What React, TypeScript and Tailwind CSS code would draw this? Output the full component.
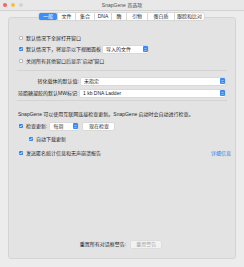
const font = { fontFamily: '"Liberation Sans", "Noto Sans CJK SC", sans-serif' };

const Check = ({ on }: { on?: boolean }) =>
  on ? (
    <span className="w-[4px] h-[4px] shrink-0 rounded-[1px] bg-[#2f83f3] flex items-center justify-center">
      <svg width="4" height="4" viewBox="0 0 8 8">
        <path d="M1.5 4.2 L3.3 6 L6.6 2" fill="none" stroke="white" strokeWidth="1.6" />
      </svg>
    </span>
  ) : (
    <span className="w-[4px] h-[4px] shrink-0 rounded-[1px] bg-white border-[0.5px] border-[#b8b8b8]" />
  );

const Stepper = () => (
  <span className="w-[5px] h-[6px] shrink-0 rounded-[1px] bg-[#3a8af5] flex flex-col items-center justify-center">
    <svg width="3" height="5" viewBox="0 0 6 10">
      <path d="M1 4 L3 2 L5 4 M1 6 L3 8 L5 6" fill="none" stroke="white" strokeWidth="1" />
    </svg>
  </span>
);

const Select = ({ text, className }: { text: string; className: string }) => (
  <div className={`h-[7px] bg-white rounded-[1px] shadow-[0_0_0_0.5px_#cfcfcf] flex items-center pl-[3px] pr-[0.5px] ${className}`}>
    <span className="flex-1 text-[5px] leading-none text-[#222]">{text}</span>
    <Stepper />
  </div>
);

const tabs: [string, string][] = [
  ["文件", "w-[18px]"],
  ["集合", "w-[19px]"],
  ["DNA", "w-[17px]"],
  ["酶", "w-[15px]"],
  ["引物", "w-[21px]"],
  ["蛋白质", "w-[27px]"],
  ["跟踪和比对", "w-[30px]"],
];

export default function App() {
  return (
    <div className="w-[244px] h-[267px] bg-[#ececec] flex flex-col text-[#262626]" style={font}>
      <div className="h-[11px] grid grid-cols-[1fr_auto_1fr] items-center px-[2.5px] bg-[#e8e8e8] border-b-[0.5px] border-[#d2d2d2]">
        <div className="flex gap-[4px]">
          <span className="w-[4px] h-[4px] rounded-full bg-[#fc605b]" />
          <span className="w-[4px] h-[4px] rounded-full bg-[#fdbc40]" />
          <span className="w-[4px] h-[4px] rounded-full bg-[#d3d3d3]" />
        </div>
        <span className="text-[5px] leading-none text-[#4d4d4d]">SnapGene 首选项</span>
        <span />
      </div>

      <div className="relative z-10 mt-[2px] -mb-[3px] flex justify-start pl-[39px]">
        <div className="flex h-[7px] rounded-[1.5px] bg-white shadow-[0_0_0_0.5px_#c9c9c9] text-[5px] leading-none">
          <span className="w-[18px] flex items-center justify-center rounded-[1.5px] bg-[#3b8ff7] text-white">一般</span>
          {tabs.map(([t, w]) => (
            <span key={t} className={`${w} flex items-center justify-center border-l-[0.5px] border-[#d6d6d6]`}>
              {t}
            </span>
          ))}
        </div>
      </div>

      <div className="mx-[8px] h-[242px] bg-[#e3e3e3] border-[0.5px] border-[#d4d4d4] rounded-[3px] flex flex-col px-[10px] pb-[10px] text-[5px] leading-none">
        <div className="mt-[16px] h-[8px] flex items-center gap-[3px]">
          <Check />
          <span>默认情况下全屏打开窗口</span>
        </div>
        <div className="mt-[3px] h-[8px] flex items-center gap-[3px]">
          <Check on />
          <span>默认情况下，将显示以下视图面板</span>
          <Select text="导入的文件" className="ml-[-1px] w-[45px]" />
        </div>
        <div className="mt-[4px] h-[8px] flex items-center gap-[3px]">
          <Check />
          <span>关闭所有其他窗口后显示“启动”窗口</span>
        </div>
        <div className="mt-[5px] mx-[-2px] h-px bg-[#d3d3d3]" />

        <div className="mt-[6px] h-[8px] flex items-center gap-[2px]">
          <span className="w-[60px] text-right">转化载体的默认值:</span>
          <Select text="未指定" className="flex-1" />
        </div>
        <div className="mt-[4px] h-[8px] flex items-center gap-[2px]">
          <span className="w-[60px] text-right whitespace-nowrap -ml-[1px]">琼脂糖凝胶的默认MW标记:</span>
          <Select text="1 kb DNA Ladder" className="flex-1" />
        </div>
        <div className="mt-[3px] mx-[-2px] h-px bg-[#d3d3d3]" />

        <div className="mt-[9px] h-[8px] flex items-center -ml-[1px] whitespace-nowrap">
          SnapGene 可以使用互联网连接检查更新。SnapGene 启动时会自动进行检查。
        </div>
        <div className="mt-[4px] h-[8px] flex items-center gap-[3px]">
          <Check on />
          <span>检查更新:</span>
          <Select text="每周" className="w-[28px]" />
          <span className="ml-[2px] w-[31px] h-[7px] bg-white rounded-[1px] shadow-[0_0_0_0.5px_#d0d0d0] flex items-center justify-center">
            现在检查
          </span>
        </div>
        <div className="mt-[5px] h-[8px] flex items-center gap-[3px] pl-[10px]">
          <Check on />
          <span>自动下载更新</span>
        </div>
        <div className="mt-[6px] h-[8px] flex items-center gap-[3px]">
          <Check on />
          <span>发送匿名统计信息和无声崩溃报告</span>
          <span className="ml-auto -mr-[6px] text-[#2b7de9]">详细信息</span>
        </div>

        <div className="mt-auto h-[8px] flex items-center justify-center gap-[5px] pr-[3px]">
          <span>重置所有对话框警告:</span>
          <span className="w-[30px] h-[7px] bg-[#f2f2f2] rounded-[1px] shadow-[0_0_0_0.5px_#d8d8d8] flex items-center justify-center text-[#a8a8a8]">
            重置警告
          </span>
        </div>
      </div>
    </div>
  );
}
